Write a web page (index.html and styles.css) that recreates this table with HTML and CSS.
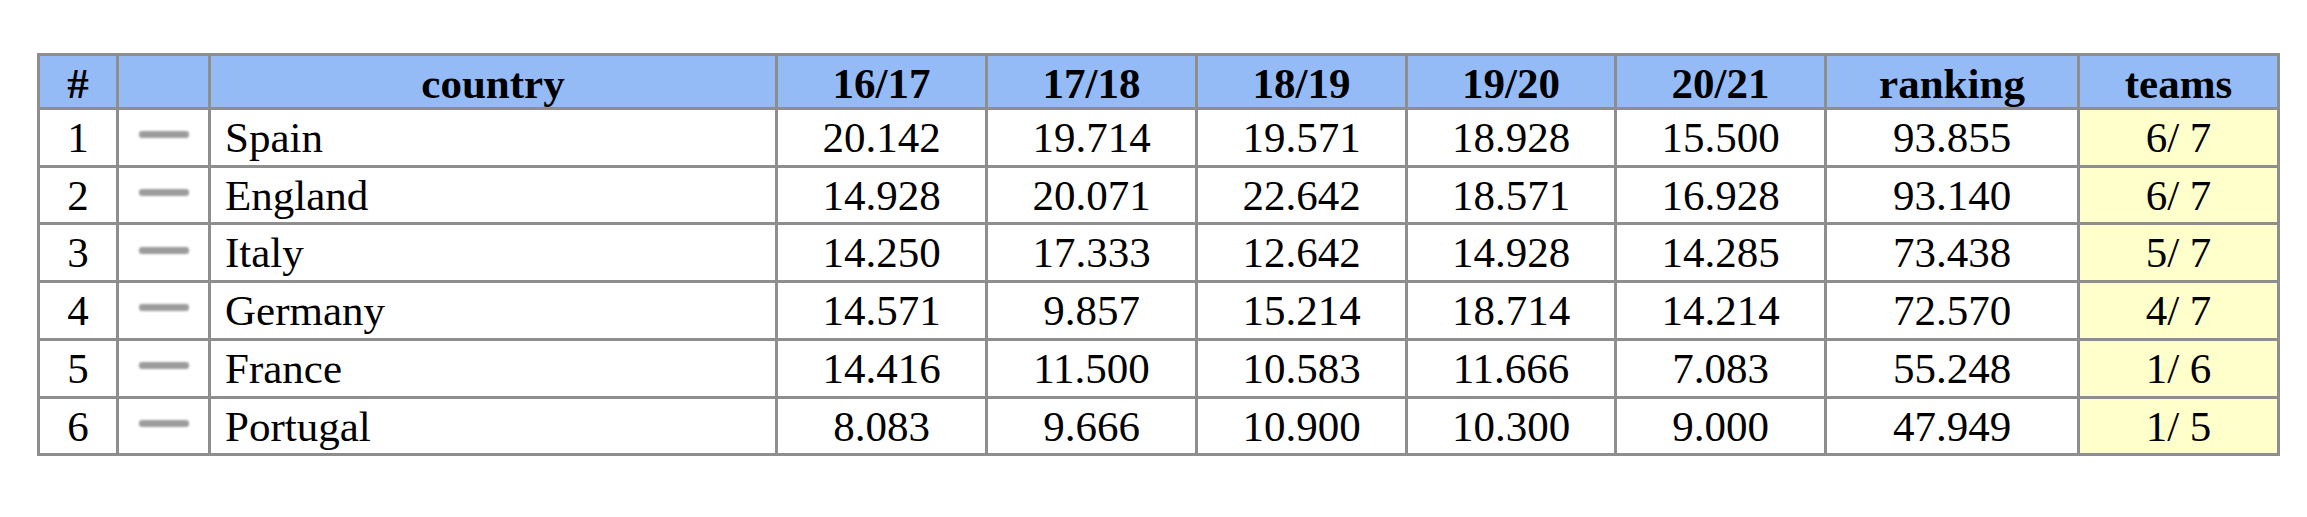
FILE: index.html
```html
<!DOCTYPE html>
<html lang="en">
<head>
    <meta charset="UTF-8">
    <meta name="viewport" content="width=device-width, initial-scale=1.0">
    <title>Country ranking</title>
    <link rel="stylesheet" href="styles.css">
</head>
<body>
    <table class="ranking">
        <colgroup>
            <col class="col-pos">
            <col class="col-trend">
            <col class="col-country">
            <col class="col-season">
            <col class="col-season">
            <col class="col-season">
            <col class="col-season-narrow">
            <col class="col-season">
            <col class="col-total">
            <col class="col-teams">
        </colgroup>
        <thead>
            <tr>
                <th>#</th>
                <th></th>
                <th>country</th>
                <th>16/17</th>
                <th>17/18</th>
                <th>18/19</th>
                <th>19/20</th>
                <th>20/21</th>
                <th>ranking</th>
                <th>teams</th>
            </tr>
        </thead>
        <tbody>
            <tr>
                <td>1</td>
                <td><span class="trend"></span></td>
                <td class="country">Spain</td>
                <td>20.142</td>
                <td>19.714</td>
                <td>19.571</td>
                <td>18.928</td>
                <td>15.500</td>
                <td>93.855</td>
                <td class="teams">6/ 7</td>
            </tr>
            <tr>
                <td>2</td>
                <td><span class="trend"></span></td>
                <td class="country">England</td>
                <td>14.928</td>
                <td>20.071</td>
                <td>22.642</td>
                <td>18.571</td>
                <td>16.928</td>
                <td>93.140</td>
                <td class="teams">6/ 7</td>
            </tr>
            <tr>
                <td>3</td>
                <td><span class="trend"></span></td>
                <td class="country">Italy</td>
                <td>14.250</td>
                <td>17.333</td>
                <td>12.642</td>
                <td>14.928</td>
                <td>14.285</td>
                <td>73.438</td>
                <td class="teams">5/ 7</td>
            </tr>
            <tr>
                <td>4</td>
                <td><span class="trend"></span></td>
                <td class="country">Germany</td>
                <td>14.571</td>
                <td>9.857</td>
                <td>15.214</td>
                <td>18.714</td>
                <td>14.214</td>
                <td>72.570</td>
                <td class="teams">4/ 7</td>
            </tr>
            <tr>
                <td>5</td>
                <td><span class="trend"></span></td>
                <td class="country">France</td>
                <td>14.416</td>
                <td>11.500</td>
                <td>10.583</td>
                <td>11.666</td>
                <td>7.083</td>
                <td>55.248</td>
                <td class="teams">1/ 6</td>
            </tr>
            <tr>
                <td>6</td>
                <td><span class="trend"></span></td>
                <td class="country">Portugal</td>
                <td>8.083</td>
                <td>9.666</td>
                <td>10.900</td>
                <td>10.300</td>
                <td>9.000</td>
                <td>47.949</td>
                <td class="teams">1/ 5</td>
            </tr>
        </tbody>
    </table>
</body>
</html>
```

FILE: styles.css
```css
body {
    margin: 0;
    padding: 53px 0 0 37px;
    background-color: #ffffff;
    font-family: "Liberation Serif", "Times New Roman", serif;
    color: #000000;
}

.ranking {
    table-layout: fixed;
    width: 2243px;
    border-collapse: separate;
    border-spacing: 0;
    border-top: 3px solid #8e8e8e;
    border-left: 3px solid #8e8e8e;
    font-size: 43px;
}

.col-pos { width: 79px; }
.col-trend { width: 92px; }
.col-country { width: 567px; }
.col-season { width: 210px; }
.col-season-narrow { width: 209px; }
.col-total { width: 253px; }
.col-teams { width: 200px; }

.ranking th,
.ranking td {
    box-sizing: border-box;
    border-right: 3px solid #8e8e8e;
    border-bottom: 3px solid #8e8e8e;
    text-align: center;
    white-space: pre;
    padding: 3px 0 2px;
    line-height: 49.7px;
}

.ranking th {
    background-color: #95bbf7;
    font-weight: bold;
    padding: 5px 0 0;
    line-height: 46px;
}

.ranking td.country {
    text-align: left;
    padding-left: 14px;
}

.ranking td.teams {
    background-color: #ffffcc;
}

.trend {
    display: inline-block;
    width: 50px;
    height: 7px;
    margin-bottom: 15px;
    vertical-align: middle;
    background-color: #9c9c9c;
    border-radius: 3px;
    filter: blur(1.2px);
}
```
